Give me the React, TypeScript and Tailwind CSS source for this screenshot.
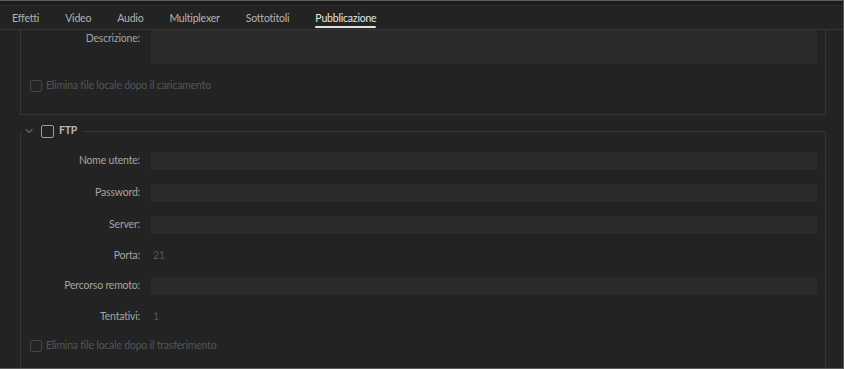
import { ChevronDown } from 'lucide-react';

const tabs = ['Effetti', 'Video', 'Audio', 'Multiplexer', 'Sottotitoli', 'Pubblicazione'];

function Field({ label, children, short }: { label: string; children?: React.ReactNode; short?: boolean }) {
    return (
        <div className={short ? 'flex items-center h-[15px]' : 'flex items-center h-[18px]'}>
            <span className="w-[120px] shrink-0 text-right text-[#a3a3a3] pr-px">{label}</span>
            <div className="flex-1 ml-[10px] mr-[8px] h-full flex items-center">{children}</div>
        </div>
    );
}

function InputBox() {
    return <div className="h-full w-full bg-[#2b2b2b] rounded-[2px]" />;
}

function DisabledCheck({ label }: { label: string }) {
    return (
        <div className="flex items-center gap-[4px] pl-[9px]">
            <span className="w-[12px] h-[12px] border border-[#464646] rounded-[2px]" />
            <span className="text-[#555555]">{label}</span>
        </div>
    );
}

export default function App() {
    return (
        <div
            className="w-[844px] h-[369px] bg-[#232323] border-t border-r border-b border-[#5c5c5c] overflow-hidden flex flex-col text-[10.5px] tracking-[-0.2px]"
            style={{ fontFamily: 'Lato, "Open Sans", sans-serif' }}
        >
            <div className="h-[5px] bg-[#1b1b1b] border-b border-[#2f2f2f] shrink-0" />

            <div className="h-[24px] shrink-0 flex items-stretch pl-[12px] gap-[26px] border-b border-[#363636]">
                {tabs.map((t) => (
                    <div
                        key={t}
                        className={
                            t === 'Pubblicazione'
                                ? 'relative flex items-center pt-[2px] text-[#e6e6e6]'
                                : 'relative flex items-center pt-[2px] text-[#b3b3b3]'
                        }
                    >
                        {t}
                        {t === 'Pubblicazione' && (
                            <span className="absolute left-0 right-0 bottom-[1px] h-[2px] bg-[#e0e0e0] rounded-full" />
                        )}
                    </div>
                ))}
            </div>

            <div className="flex-1 pl-[20px] pr-[17px] flex flex-col">
                {/* top box, scrolled so its header is hidden */}
                <div className="border-l border-r border-b border-[#353535] h-[85px] shrink-0">
                    <div className="flex items-start">
                        <span className="w-[120px] shrink-0 text-right text-[#a3a3a3] pr-px pt-[1px]">Descrizione:</span>
                        <div className="flex-1 ml-[10px] mr-[8px] h-[34px] bg-[#2b2b2b] rounded-b-[2px]" />
                    </div>
                    <div className="mt-[14px]">
                        <DisabledCheck label="Elimina file locale dopo il caricamento" />
                    </div>
                </div>

                <div className="mt-[9px] flex-1 flex flex-col">
                    <div className="flex items-center h-[14px]">
                        <ChevronDown size={12} strokeWidth={2} className="text-[#9a9a9a] ml-[3px]" />
                        <span className="ml-[6px] w-[13px] h-[13px] border-[1.5px] border-[#9c9c9c] rounded-[2px]" />
                        <span className="ml-[5px] text-[#b8b8b8] font-bold">FTP</span>
                        <div className="flex-1 ml-[6px] border-t border-[#353535]" />
                    </div>
                    <div className="flex-1 -mt-[7px] border-l border-r border-[#353535] pt-[21px] flex flex-col gap-[14px]">
                        <Field label="Nome utente:"><InputBox /></Field>
                        <Field label="Password:"><InputBox /></Field>
                        <Field label="Server:"><InputBox /></Field>
                        <Field label="Porta:" short><span className="text-[#565656] pl-[2px]">21</span></Field>
                        <Field label="Percorso remoto:"><InputBox /></Field>
                        <Field label="Tentativi:" short><span className="text-[#565656] pl-[2px]">1</span></Field>
                        <DisabledCheck label="Elimina file locale dopo il trasferimento" />
                    </div>
                </div>
            </div>
        </div>
    );
}
